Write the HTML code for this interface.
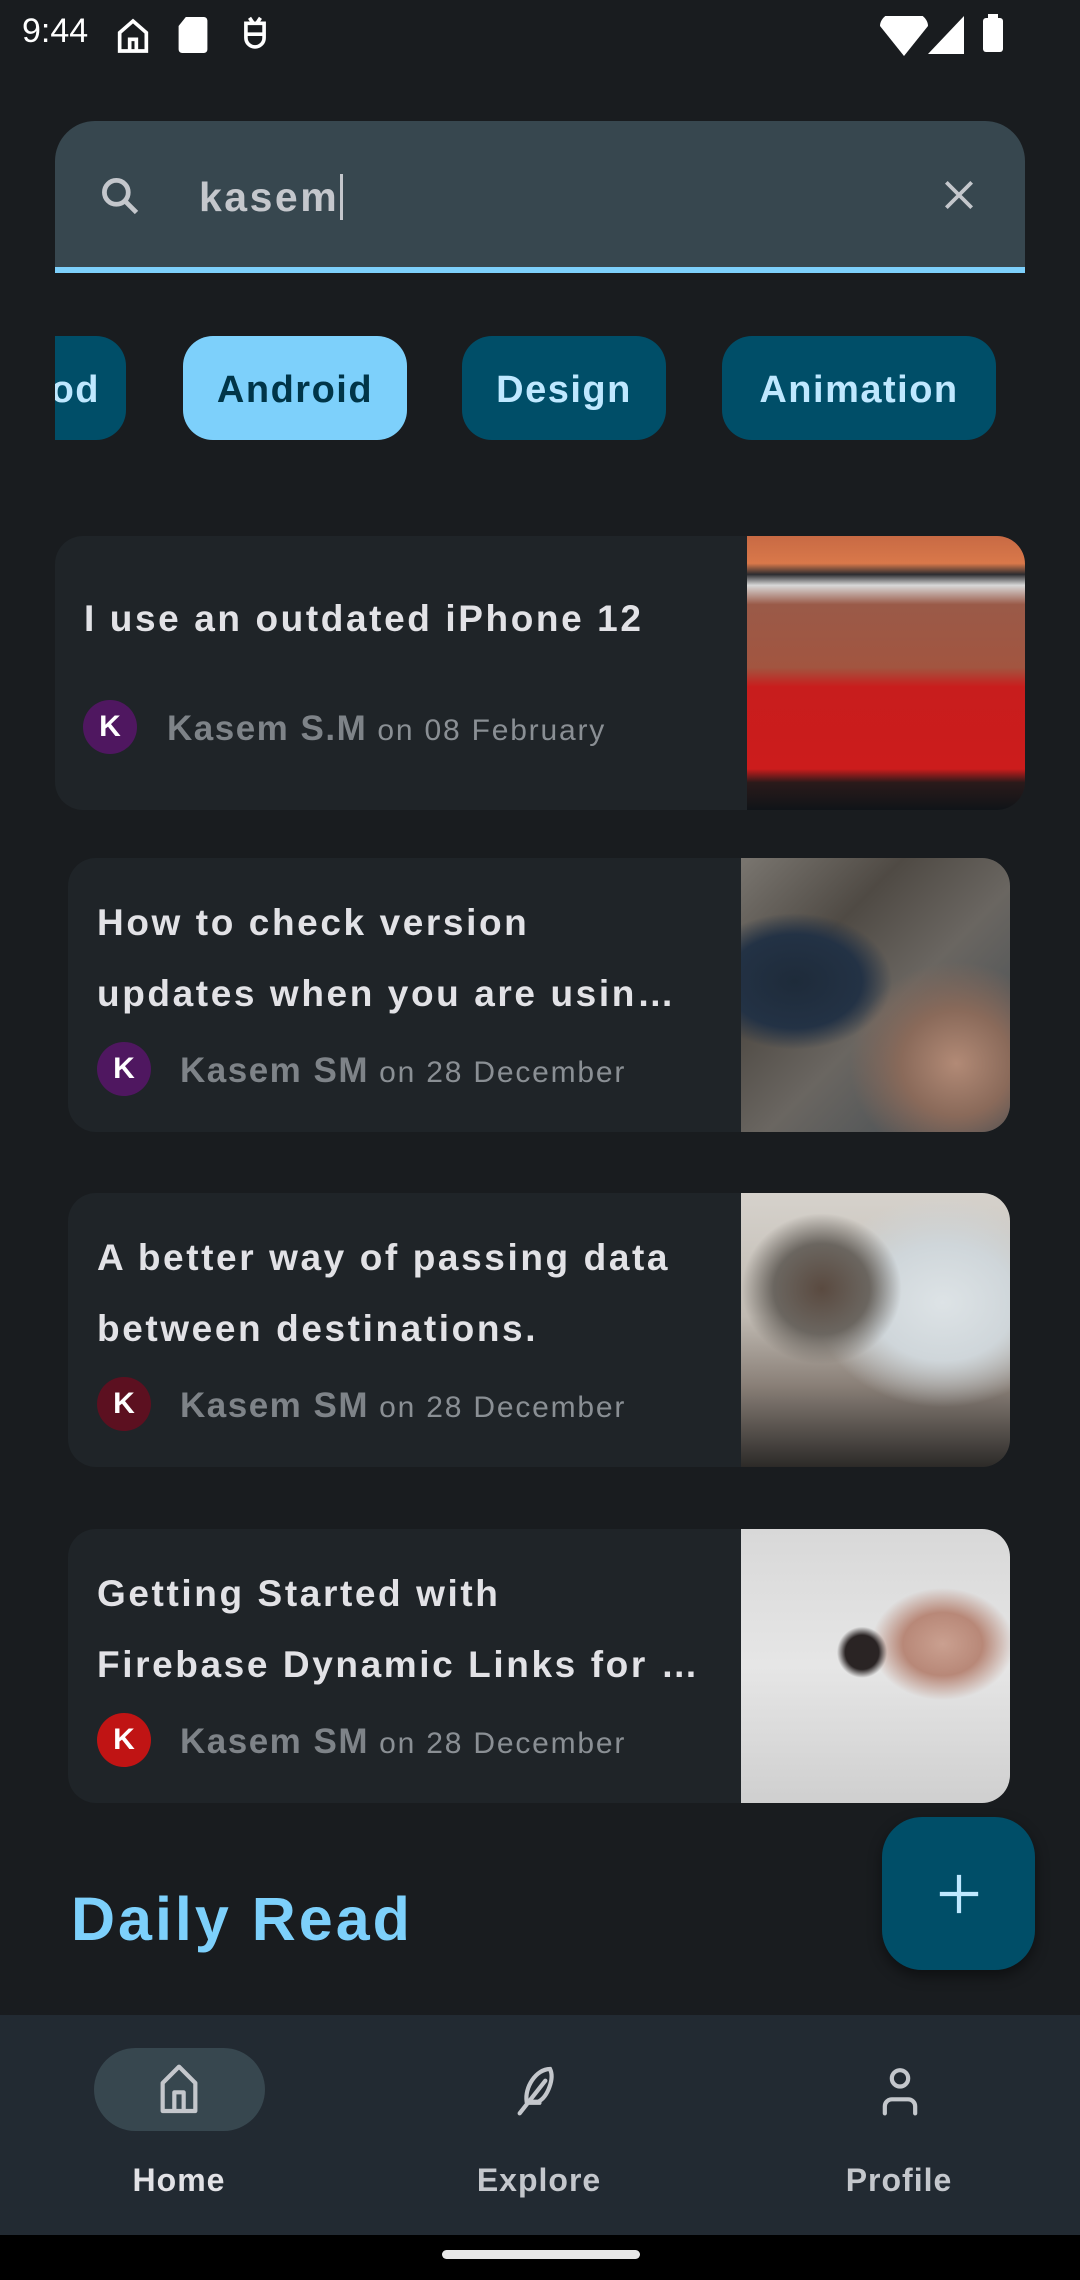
<!DOCTYPE html>
<html><head><meta charset="utf-8"><style>
*{margin:0;padding:0;box-sizing:border-box}
body{width:1080px;height:2280px;background:#191c1f;font-family:"Liberation Sans",sans-serif;position:relative;overflow:hidden;color:#e2e2e6}
.abs{position:absolute}
.search{left:55px;top:121px;width:970px;height:152px;background:#37474f;border-radius:40px 40px 0 0;border-bottom:6px solid #7dd0fb}
.chip{top:336px;height:104px;border-radius:30px;background:#004e68;color:#bfe8ff;font-size:38px;font-weight:bold;letter-spacing:1.5px;display:flex;align-items:center;justify-content:center;padding-top:4px}
.card{background:#1f2428;border-radius:28px;overflow:hidden;height:274px}
.card .img{position:absolute;top:0;right:0;bottom:0}
.t{position:absolute;font-size:37px;font-weight:bold;letter-spacing:2.6px;color:#e2e2e6;white-space:nowrap}
.auth{position:absolute;white-space:nowrap;color:#8a8f94;font-size:30px;letter-spacing:1.8px}
.auth b{font-size:35px;letter-spacing:1.5px;color:#7e8388}
.av{position:absolute;width:54px;height:54px;border-radius:50%;color:#fff;font-size:30px;font-weight:bold;display:flex;align-items:center;justify-content:center}
.nav{left:0;top:2015px;width:1080px;height:220px;background:#222a32}
.lbl{position:absolute;top:2162px;font-size:32px;font-weight:bold;letter-spacing:1px;color:#c4c7cc;width:300px;text-align:center}
</style></head><body>
<div class="abs" style="left:22px;top:12px;font-size:34px;color:#fff">9:44</div>
<svg class="abs" style="left:113px;top:16px" width="40" height="40" viewBox="0 0 24 24" fill="none" stroke="#fff" stroke-width="2.2"><path d="M4 21V10l8-7 8 7v11zM10 21v-7h4v7"/></svg>
<svg class="abs" style="left:178px;top:17px" width="30" height="36" viewBox="0 0 16 20"><path d="M4 0h10a2 2 0 0 1 2 2v16a2 2 0 0 1-2 2H2a2 2 0 0 1-2-2V5z" fill="#fff"/></svg>
<svg class="abs" style="left:240px;top:16px" width="30" height="40" viewBox="0 0 16 22" fill="none" stroke="#fff" stroke-width="2"><path d="M3 4h10v8a5 5 0 0 1-10 0zM3 10h10M5 1l2 3M11 1l-2 3"/></svg>
<svg class="abs" style="left:880px;top:16px" width="48" height="40" viewBox="0 0 24 20"><path d="M0 5a12 8 0 0 1 24 0L12 20z" fill="#fff"/></svg>
<svg class="abs" style="left:928px;top:16px" width="36" height="38" viewBox="0 0 18 19"><path d="M18 0v19H0z" fill="#fff"/></svg>
<div class="abs" style="left:983px;top:18px;width:20px;height:34px;background:#fff;border-radius:3px"></div>
<div class="abs" style="left:988px;top:14px;width:10px;height:6px;background:#fff"></div>

<div class="abs search"></div>
<svg class="abs" style="left:98px;top:174px" width="44" height="44" viewBox="0 0 24 24" fill="none" stroke="#c4c7cc" stroke-width="2.6"><circle cx="10" cy="10" r="6.5"/><path d="M15 15l6 6"/></svg>
<div class="abs" style="left:199px;top:172px;font-size:41px;font-weight:bold;letter-spacing:2.5px;color:#c4c7cc;line-height:50px"><span style="border-right:3px solid #c4c7cc;padding-right:1px">kasem</span></div>
<svg class="abs" style="left:940px;top:176px" width="38" height="38" viewBox="0 0 24 24" stroke="#c4c7cc" stroke-width="2.4"><path d="M4 4l16 16M20 4L4 20"/></svg>

<div style="position:absolute;left:55px;top:0;width:980px;height:500px;overflow:hidden">
<div class="abs chip" style="left:-90px;width:161px;justify-content:flex-end;padding-right:26px">Food</div>
</div>
<div class="abs chip" style="left:183px;width:224px;background:#7dd0fb;color:#003548">Android</div>
<div class="abs chip" style="left:462px;width:204px">Design</div>
<div class="abs chip" style="left:722px;width:274px">Animation</div>

<div class="abs card" style="left:55px;top:536px;width:970px">
<div class="img" style="width:278px;background:linear-gradient(180deg,#c86a44 0%,#d9784a 10%,#2c2c30 14%,#d8d8d8 18%,#9a5a48 25%,#a25540 48%,#c81d1d 55%,#cc1c1c 85%,#2a1a1a 90%,#101418 100%)"></div>
<div class="t" style="left:29px;top:62px">I use an outdated iPhone 12</div>
<div class="av" style="left:28px;top:164px;background:#4f1760">K</div>
<div class="auth" style="left:112px;top:173px"><b>Kasem S.M</b> on 08 February</div>
</div>
<div class="abs card" style="left:68px;top:858px;width:942px">
<div class="img" style="width:269px;background:radial-gradient(ellipse at 80% 75%,#b28a76 0,#8a6a5a 18%,transparent 35%),radial-gradient(ellipse at 20% 45%,#1e2b3a 0,#233245 22%,transparent 32%),linear-gradient(135deg,#7a7670 0%,#4f4a44 30%,#6a6661 55%,#3e4850 100%)"></div>
<div class="t" style="left:29px;top:44px">How to check version</div>
<div class="t" style="left:29px;top:115px">updates when you are usin…</div>
<div class="av" style="left:29px;top:184px;background:#4f1760">K</div>
<div class="auth" style="left:112px;top:193px"><b>Kasem SM</b> on 28 December</div>
</div>
<div class="abs card" style="left:68px;top:1193px;width:942px">
<div class="img" style="width:269px;background:radial-gradient(ellipse at 30% 35%,#5a4a40 0,#6b6660 18%,transparent 30%),radial-gradient(ellipse at 75% 40%,#dde3e6 0,#cfd6da 25%,transparent 45%),linear-gradient(180deg,#d6d2cc 0%,#c0bab2 45%,#8a8078 70%,#2c2a28 100%)"></div>
<div class="t" style="left:29px;top:44px">A better way of passing data</div>
<div class="t" style="left:29px;top:115px">between destinations.</div>
<div class="av" style="left:29px;top:184px;background:#5c1020">K</div>
<div class="auth" style="left:112px;top:193px"><b>Kasem SM</b> on 28 December</div>
</div>
<div class="abs card" style="left:68px;top:1529px;width:942px">
<div class="img" style="width:269px;background:radial-gradient(ellipse at 45% 45%,#2a2424 0,#2a2424 8%,transparent 12%),radial-gradient(ellipse at 75% 42%,#caa090 0,#b88878 14%,transparent 25%),linear-gradient(180deg,#d8d8d8 0%,#e6e6e6 50%,#cfcfcf 100%)"></div>
<div class="t" style="left:29px;top:44px">Getting Started with</div>
<div class="t" style="left:29px;top:115px">Firebase Dynamic Links for …</div>
<div class="av" style="left:29px;top:184px;background:#c01414">K</div>
<div class="auth" style="left:112px;top:193px"><b>Kasem SM</b> on 28 December</div>
</div>

<div class="abs" style="left:71px;top:1884px;font-size:61px;font-weight:bold;color:#7dd0fb;letter-spacing:3px">Daily Read</div>
<div class="abs" style="left:882px;top:1817px;width:153px;height:153px;border-radius:40px;background:#004e68;box-shadow:0 6px 14px rgba(0,0,0,.45)"></div>
<svg class="abs" style="left:936px;top:1871px" width="46" height="46" viewBox="0 0 24 24" stroke="#bfe8ff" stroke-width="2.2"><path d="M12 2v20M2 12h20"/></svg>

<div class="abs nav"></div>
<div class="abs" style="left:94px;top:2048px;width:171px;height:83px;border-radius:42px;background:#37474f"></div>
<svg class="abs" style="left:151px;top:2062px" width="56" height="56" viewBox="0 0 24 24" fill="none" stroke="#c4c7cc" stroke-width="1.8" stroke-linejoin="round"><path d="M5 21V9l7-7 7 7v12zM10 21v-8h4v8"/></svg>
<svg class="abs" style="left:508px;top:2062px" width="56" height="56" viewBox="0 0 24 24" fill="none" stroke="#c4c7cc" stroke-width="1.8" stroke-linecap="round"><path d="M5 22L16 8M8.5 17.5h5M8 17c-1-6 4-14 10-14 2 4-1 12-5 14z"/></svg>
<svg class="abs" style="left:872px;top:2062px" width="56" height="56" viewBox="0 0 24 24" fill="none" stroke="#c4c7cc" stroke-width="1.8" stroke-linecap="round"><circle cx="12" cy="7" r="3.5"/><path d="M5.5 22v-3a3 3 0 0 1 3-3h7a3 3 0 0 1 3 3v3"/></svg>
<div class="lbl" style="left:29px;color:#e2e2e6">Home</div>
<div class="lbl" style="left:389px">Explore</div>
<div class="lbl" style="left:749px">Profile</div>
<div class="abs" style="left:0;top:2235px;width:1080px;height:45px;background:#000"></div>
<div class="abs" style="left:442px;top:2250px;width:198px;height:9px;border-radius:5px;background:#e8e8e8"></div>
</body></html>
